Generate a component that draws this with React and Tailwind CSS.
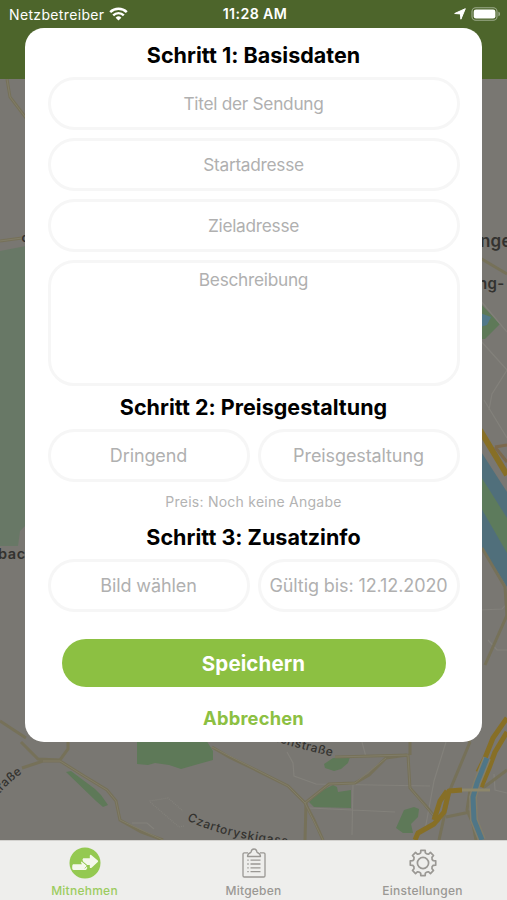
const FONT = "font-['Inter','Liberation_Sans',sans-serif]";

// outline of an eight-toothed cog centred on 0,0
function gearPath(teeth, outer, inner) {
  const step = (Math.PI * 2) / teeth;
  const pt = (r, a) => `${(r * Math.sin(a)).toFixed(2)} ${(-r * Math.cos(a)).toFixed(2)}`;
  let d = "";
  for (let i = 0; i < teeth; i++) {
    const a = i * step;
    d += `${i === 0 ? "M" : "L"}${pt(inner + 0.4, a - 0.22)}`;
    d += `L${pt(outer, a - 0.17)}L${pt(outer, a + 0.17)}L${pt(inner + 0.4, a + 0.22)}`;
    d += `Q${pt(inner - 0.9, a + step / 2)} ${pt(inner + 0.4, a + step - 0.22)}`;
  }
  return d + "Z";
}

function StatusBar() {
  return (
    <div className="grid h-7 grid-cols-3 items-center pl-[9px] pr-[6px] text-white">
      <div className="flex items-center gap-[5px]">
        <span className="text-[14px] tracking-[0.35px]">Netzbetreiber</span>
        <svg className="h-[14px] w-[19px]" viewBox="0 0 19 14" fill="none" stroke="currentColor">
          <path d="M1.2 5.1a11.8 11.8 0 0 1 16.6 0" strokeWidth="2.5" />
          <path d="M4.2 8.3a7.5 7.5 0 0 1 10.6 0" strokeWidth="2.4" />
          <path d="M9.5 13.6 6.6 10.7a4.1 4.1 0 0 1 5.8 0Z" fill="currentColor" stroke="none" />
        </svg>
      </div>
      <span className="text-center text-[14.2px] font-semibold tracking-[0.4px]">11:28 AM</span>
      <div className="flex items-center justify-end gap-[5px]">
        <svg className="h-3 w-3" viewBox="0 0 12 12" fill="currentColor" stroke="currentColor" strokeWidth="1" strokeLinejoin="round">
          <path d="M11.3.7 6.9 11.2 6.4 5.9.7 5.5Z" />
        </svg>
        <svg className="h-[14px] w-[30px]" viewBox="0 0 30 14">
          <rect x="1" y=".8" width="25" height="12.4" rx="3.8" fill="none" stroke="#9caa8a" strokeWidth="1.1" />
          <rect x="2.7" y="2.5" width="21.7" height="9" rx="2.3" fill="#fff" />
          <path d="M27.4 4.7c2.2.5 2.2 4.1 0 4.6Z" fill="#9caa8a" />
        </svg>
      </div>
    </div>
  );
}

function MapView() {
  return (
    <svg className="block h-full w-full" viewBox="0 79 507 761" preserveAspectRatio="none">
      <rect y="79" width="507" height="761" fill="#797772" />

      {/* parks */}
      <g fill="#5e7958">
        <path d="M0 251 26 246V525L20 531 18 546H0Z" fill="#687866" />
        <path d="M137 740H206L213 751V760L195 765 181 769 169 765 155 763 148 765 137 764Z" />
        <path d="M66 772 71 771 95 789 101 795 108 805 103 807 96 801Z" />
        <path d="M324 764 333 758 350 757 348 763 341 769 334 771 325 768Z" />
        <path d="M309 802 319 792 333 785 337 787 338 792 351 790 351 808 314 807Z" />
        <path d="M396 828 404 810 414 807 419 809 418 817 411 824 413 833 403 833Z" />
        <path d="M480 303 500 324 485 339H480Z" />
      </g>
      <path d="M480 313 491 317 487 325 480 327Z" fill="#52798a" />

      {/* Donau */}
      <path d="M480 450 507 492V587L480 544Z" fill="#506f7b" />
      <path d="M480 475 507 518V553L480 506Z" fill="#5d7b5c" />

      {/* side streets */}
      <g fill="none" stroke="#83817b" strokeWidth="1.2">
        <path d="M184 826 179 827 150 802V801L168 798 183 811" strokeDasharray="1 1" />
        <path d="M132 823H147L154 829" />
        <path d="M287 752 293 763 294 776 316 784 430 786" />
        <path d="M353 784 352 835M309 808 395 812" />
        <path d="M446 742 434 781 425 830M362 742 366 757M480 340 507 370 492 394 489 410M484 400 507 438" />
        <path d="M480 610 502 609 507 604M488 640 497 650 507 650M480 300 507 332M494 774 495 790 507 793" />
      </g>
      <g fill="none" stroke="#767159" strokeWidth="3">
        <path d="M7 79 10 97 26 118M0 241 22 238M0 721 26 738" />
        <path d="M21 742 38 759 60 760 68 749V742M22 768 43 761 60 761 84 776 107 790 116 801 120 820 141 832 163 840" />
        <path d="M212 747 229 757 254 769 288 786 305 803 314 820 323 840" />
        <path d="M305 803 329 784 355 783 369 775 386 758 407 755" />
        <path d="M335 757 408 755 410 788 426 806 439 822M410 755V742M306 803 305 840" />
        <path d="M470 742 450 790 439 840M480 258 507 274M482 548 505 587 507 617M507 615 485 665" />
        <path d="M470 790 467 810 473 824 476 840M507 770 483 788M480 700 469 742M446 817 470 812" />
      </g>
      <g fill="none" stroke="#817d68" strokeWidth="1">
        <path d="M7 79 10 97 26 118M0 241 22 238M43 761 60 761 84 776 107 790 116 801 120 820 163 840" />
        <path d="M212 747 288 786 305 803 323 840M335 757 408 755 410 788 439 822M305 803 329 784 355 783 386 758" />
      </g>

      {/* main roads */}
      <g fill="none" stroke="#876f26" strokeLinejoin="round">
        <path d="M480 430 507 475" strokeWidth="6" />
        <path d="M495 447 507 445M495 447 507 462" strokeWidth="3" stroke="#7b694d" />
        <path d="M507 718 493 738 485 758 478 772M507 732 495 752 489 768 481 787" strokeWidth="5" />
        <path d="M415 840 418 833 434 824 444 812 449 791 462 790M434 820 440 801 447 791" strokeWidth="5" />
      </g>
      <path d="M487 758 477 783 473 797 474 820 482 840" fill="none" stroke="#827e6b" strokeWidth="8" />
      <path d="M487 758 477 783 473 797 474 820 482 840" fill="none" stroke="#4f7687" strokeWidth="5" />
      <path d="M462 790 490 790" stroke="#8d876b" strokeWidth="3" />

      <defs>
        <path id="czartoryskigasse" d="M187 820Q218 837 285 845" />
        <path id="bachstrasse" d="M265 738Q298 749 348 760" />
        <path id="strasse" d="M-5 800Q7 781 38 763" />
      </defs>
      <g fill="#33322f" className="font-['Inter','Liberation_Sans',sans-serif] font-medium">
        <text fontSize="12" letterSpacing=".75">
          <textPath href="#czartoryskigasse">Czartoryskigasse</textPath>
        </text>
        <text fontSize="12" letterSpacing=".5">
          <textPath href="#bachstrasse">bachstraße</textPath>
        </text>
        <text fontSize="12" letterSpacing=".4">
          <textPath href="#strasse">straße</textPath>
        </text>
        <text x="480" y="247" fontSize="17" letterSpacing=".2" className="font-semibold">nge</text>
        <text x="478" y="289" fontSize="15" letterSpacing=".3" className="font-semibold">ng-</text>
        <text x="-2" y="559" fontSize="14.5" letterSpacing=".6" className="font-semibold">bac</text>
        <text x="21.5" y="242" fontSize="12" className="font-semibold">c</text>
      </g>
    </svg>
  );
}

function Heading({ children }) {
  return <h2 className="text-center text-[21.5px] leading-[27px] font-bold tracking-[0.02px] text-black">{children}</h2>;
}

function Field({ placeholder }) {
  return (
    <input
      type="text"
      placeholder={placeholder}
      className="block h-[53px] w-full min-w-0 rounded-full border-[3px] border-[#f6f6f6] bg-white text-center text-[17.3px] tracking-[-0.28px] placeholder:text-[#b0b0b0]"
    />
  );
}

function Choice({ children }) {
  return (
    <button className="h-[53px] min-w-0 flex-1 rounded-full border-[3px] border-[#f6f6f6] bg-white text-center text-[18px] tracking-[-0.1px] whitespace-nowrap text-[#b0b0b0]">
      {children}
    </button>
  );
}

function ShipmentForm() {
  return (
    <form className="mx-auto h-[714px] w-[457px] rounded-[19px] bg-white px-[22.5px] pt-[14px]">
      <Heading>Schritt 1: Basisdaten</Heading>
      <div className="mt-2 flex flex-col gap-2">
        <Field placeholder="Titel der Sendung" />
        <Field placeholder="Startadresse" />
        <Field placeholder="Zieladresse" />
        <textarea
          placeholder="Beschreibung"
          className="block h-[126px] w-full resize-none rounded-[26px] border-[3px] border-[#f6f6f6] bg-white pt-[5px] text-center text-[17.3px] leading-6 tracking-[-0.28px] placeholder:text-[#b0b0b0]"
        />
      </div>
      <div className="mt-2">
        <Heading>Schritt 2: Preisgestaltung</Heading>
      </div>
      <div className="mt-2 flex gap-2">
        <Choice>Dringend</Choice>
        <Choice>Preisgestaltung</Choice>
      </div>
      <p className="mt-[10px] text-center text-[14px] leading-5 tracking-[0.25px] text-[#b3b3b3]">Preis: Noch keine Angabe</p>
      <div className="mt-3">
        <Heading>Schritt 3: Zusatzinfo</Heading>
      </div>
      <div className="mt-2 flex gap-2">
        <Choice>Bild wählen</Choice>
        <Choice>Gültig bis: 12.12.2020</Choice>
      </div>
      <div className="mt-[27px] px-[14px]">
        <button className="block h-[48px] w-full rounded-full bg-[#8cc042] pt-[2px] text-[20.5px] font-bold tracking-[0.1px] text-white">
          Speichern
        </button>
      </div>
      <button className="mx-auto mt-[19px] block text-[18.3px] leading-6 font-bold tracking-[0.2px] text-[#8cc042]">Abbrechen</button>
    </form>
  );
}

function TabBar() {
  return (
    <nav className="grid h-[60px] grid-cols-3 border-t border-[#d3d2cf] bg-[#eeeeec] text-[12px] font-medium tracking-[0.25px] text-[#9a9894]">
      <div className="flex flex-col items-center pt-[6px] text-[#9ccc60]">
        <svg className="h-8 w-8" viewBox="0 0 32 32">
          <circle cx="16" cy="16" r="15.5" fill="#94c951" />
          <g fill="#f4f8ec">
            <path d="M14.2 11.2H20.8V8.7Q21 7.4 22.2 8.1L28.8 13.4Q29.5 14.2 28.8 15L22.6 20.7Q21 21.6 20.8 20.2V17.9H18L14.3 14.8Q12.6 12.6 14.2 11.2Z" />
            <path d="M4 17.3H12.9L12 15.6Q12.3 14 13.7 15L17.6 18.4Q18.8 20.4 17.4 22.4Q16.8 23 15.8 23H4.5Q2.8 22.8 3.2 20.5Q3 18 4 17.3Z" />
          </g>
          <path d="M12.9 14.4 18.3 18.7 15.8 21.4" fill="none" stroke="#94c951" strokeWidth=".8" />
        </svg>
        <span className="mt-1 leading-4">Mitnehmen</span>
      </div>
      <div className="flex flex-col items-center pt-[6px]">
        <svg className="h-8 w-8" viewBox="0 0 32 32" fill="none" stroke="currentColor" strokeWidth="1.3">
          <path d="M10 5.8H6.3A1.3 1.3 0 0 0 5 7.1V28.7A1.3 1.3 0 0 0 6.3 30H25.7A1.3 1.3 0 0 0 27 28.7V7.1A1.3 1.3 0 0 0 25.7 5.8H22" />
          <path d="M9.5 9.5Q9.4 6.6 13 5.3Q13.3 2 16 2T19 5.3Q22.6 6.6 22.5 9.5Z" strokeLinejoin="round" />
          <path d="M12.5 13.2H22.5M12.5 17H22.5M12.5 20.8H22.5M12.5 24.6H22.5" />
          <path d="M9.3 13.2H10.7M9.3 17H10.7M9.3 20.8H10.7M9.3 24.6H10.7" />
        </svg>
        <span className="mt-1 leading-4">Mitgeben</span>
      </div>
      <div className="flex flex-col items-center pt-[6px]">
        <svg className="h-8 w-8" viewBox="-16 -16 32 32" fill="none" stroke="currentColor" strokeWidth="1.7" strokeLinejoin="round">
          <path d={gearPath(8, 12.9, 10.2)} />
          <circle r="5.6" />
        </svg>
        <span className="mt-1 leading-4">Einstellungen</span>
      </div>
    </nav>
  );
}

export default function App() {
  return (
    <div className={`relative flex h-[900px] w-[507px] flex-col overflow-hidden ${FONT}`}>
      <header className="h-[79px] shrink-0 bg-[#4d652b]">
        <StatusBar />
      </header>
      <main className="min-h-0 flex-1">
        <MapView />
      </main>
      <TabBar />

      {/* Modal over header and map */}
      <div className="absolute inset-x-0 top-7">
        <ShipmentForm />
      </div>
    </div>
  );
}
